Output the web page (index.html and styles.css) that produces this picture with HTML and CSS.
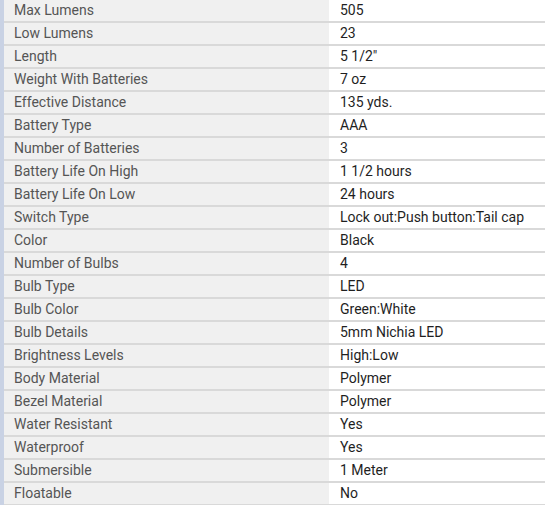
FILE: index.html
```html
<!DOCTYPE html>
<html>
<head>
<meta charset="utf-8">
<link rel="stylesheet" href="styles.css">
</head>
<body>
<div class="wrap">
<table class="specs">
<tr><th>Max Lumens</th><td>505</td></tr>
<tr><th>Low Lumens</th><td>23</td></tr>
<tr><th>Length</th><td>5 1/2"</td></tr>
<tr><th>Weight With Batteries</th><td>7 oz</td></tr>
<tr><th>Effective Distance</th><td>135 yds.</td></tr>
<tr><th>Battery Type</th><td>AAA</td></tr>
<tr><th>Number of Batteries</th><td>3</td></tr>
<tr><th>Battery Life On High</th><td>1 1/2 hours</td></tr>
<tr><th>Battery Life On Low</th><td>24 hours</td></tr>
<tr><th>Switch Type</th><td>Lock out:Push button:Tail cap</td></tr>
<tr><th>Color</th><td>Black</td></tr>
<tr><th>Number of Bulbs</th><td>4</td></tr>
<tr><th>Bulb Type</th><td>LED</td></tr>
<tr><th>Bulb Color</th><td>Green:White</td></tr>
<tr><th>Bulb Details</th><td>5mm Nichia LED</td></tr>
<tr><th>Brightness Levels</th><td>High:Low</td></tr>
<tr><th>Body Material</th><td>Polymer</td></tr>
<tr><th>Bezel Material</th><td>Polymer</td></tr>
<tr><th>Water Resistant</th><td>Yes</td></tr>
<tr><th>Waterproof</th><td>Yes</td></tr>
<tr><th>Submersible</th><td>1 Meter</td></tr>
<tr><th>Floatable</th><td>No</td></tr>
</table>
</div>
</body>
</html>
```
FILE: styles.css
```css
html, body {
  margin: 0;
  padding: 0;
  background: #ffffff;
}
.wrap {
  border-left: 4px solid #c9d2e4;
  width: 541px;
}
.specs {
  border-collapse: collapse;
  width: 541px;
  font-family: Roboto, "Liberation Sans", sans-serif;
  font-size: 14px;
}
.specs th, .specs td {
  height: 21px;
  padding: 0;
  border-bottom: 2px solid #d9d9d9;
  text-align: left;
  font-weight: normal;
  vertical-align: middle;
  line-height: 21px;
  white-space: nowrap;
}
.specs th {
  width: 315px;
  padding-left: 10px;
  background: #f0f0f0;
  color: #555555;
}
.specs td {
  padding-left: 11px;
  color: #1f1f1f;
  background: #ffffff;
}
```
